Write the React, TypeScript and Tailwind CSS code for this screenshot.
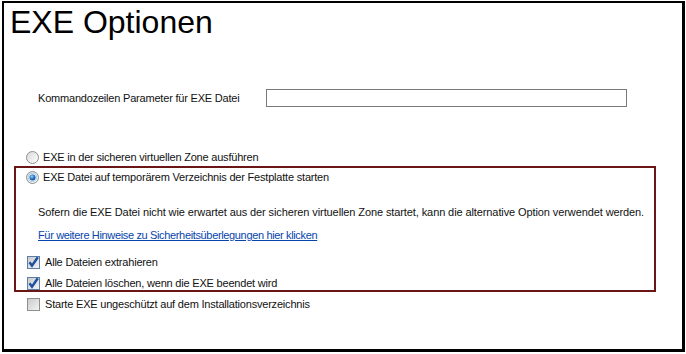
import React from "react";

const font = { fontFamily: '"Liberation Sans", Arial, sans-serif' };

function Radio({ checked }: { checked?: boolean }) {
  return (
    <svg width="13" height="13" viewBox="0 0 13 13" className="shrink-0">
      <defs>
        <linearGradient id={checked ? "rg1" : "rg0"} x1="0" y1="0" x2="1" y2="1">
          <stop offset="0" stopColor="#d8d8d8" />
          <stop offset="1" stopColor="#ffffff" />
        </linearGradient>
        <radialGradient id="dot" cx="0.4" cy="0.35" r="0.7">
          <stop offset="0" stopColor="#9fd4f7" />
          <stop offset="0.5" stopColor="#2f7fcf" />
          <stop offset="1" stopColor="#0b3f86" />
        </radialGradient>
      </defs>
      <circle cx="6.5" cy="6.5" r="6" fill={`url(#${checked ? "rg1" : "rg0"})`} stroke="#8e8f8f" strokeWidth="1" />
      {checked && (
        <>
          <circle cx="6.5" cy="6.5" r="4.3" fill="none" stroke="#a7d4f2" strokeWidth="1" />
          <circle cx="6.5" cy="6.5" r="3" fill="url(#dot)" />
        </>
      )}
    </svg>
  );
}

function Check({ checked }: { checked?: boolean }) {
  return (
    <svg width="13" height="13" viewBox="0 0 13 13" className="shrink-0">
      <defs>
        <linearGradient id="cbg" x1="0" y1="0" x2="1" y2="1">
          <stop offset="0" stopColor="#c9c9c9" />
          <stop offset="1" stopColor="#f4f4f4" />
        </linearGradient>
      </defs>
      <rect x="0.5" y="0.5" width="12" height="12" fill="url(#cbg)" stroke={checked ? "#5c7fa8" : "#8e8f8f"} />
      {checked && (
        <path d="M2.5 6.2 L5 9.6 L10.8 1.2" fill="none" stroke="#1b4fa0" strokeWidth="2.4" strokeLinejoin="miter" />
      )}
    </svg>
  );
}

export default function App() {
  return (
    <div className="w-[686px] h-[354px] bg-white pt-[1px] pl-[2px]" style={font}>
      <div className="w-[683px] h-[351px] border-black border-l-2 border-t-2 border-r-[3px] border-b-[3px] flex flex-col">
        <div className="mt-[3px] ml-[6px] text-[32px] leading-[32px] text-black">EXE Optionen</div>

        <div className="mt-[51px] flex items-center h-[18px] text-[11px] tracking-[-0.2px] text-[#111]">
          <div className="ml-[34px] w-[228px]">Kommandozeilen Parameter für EXE Datei</div>
          <div className="w-[361px] h-[18px] border border-[#7a7a7a] bg-white" />
        </div>

        <div className="mt-[43px] ml-[22px] flex items-center gap-[4px] h-[14px] text-[11px] tracking-[-0.2px] text-[#111]">
          <Radio />
          <span>EXE in der sicheren virtuellen Zone ausführen</span>
        </div>

        <div className="mt-[2px] ml-[10px] w-[642px] h-[126px] border-2 border-[#6a1616] flex flex-col text-[11px] tracking-[-0.2px] text-[#111]">
          <div className="mt-[2px] ml-[10px] flex items-center gap-[4px] h-[14px]">
            <Radio checked />
            <span>EXE Datei auf temporärem Verzeichnis der Festplatte starten</span>
          </div>
          <div className="mt-[21px] ml-[22px] h-[14px] leading-[14px] whitespace-nowrap tracking-[-0.1px]">
            Sofern die EXE Datei nicht wie erwartet aus der sicheren virtuellen Zone startet, kann die alternative Option verwendet werden.
          </div>
          <div className="mt-[9px] ml-[22px] h-[14px] leading-[14px] text-[#0645ad] underline tracking-[-0.35px]">
            Für weitere Hinweise zu Sicherheitsüberlegungen hier klicken
          </div>
          <div className="mt-[13px] ml-[11px] flex items-center gap-[5px] h-[14px]">
            <Check checked />
            <span>Alle Dateien extrahieren</span>
          </div>
          <div className="mt-[7px] ml-[11px] flex items-center gap-[5px] h-[14px]">
            <Check checked />
            <span>Alle Dateien löschen, wenn die EXE beendet wird</span>
          </div>
        </div>

        <div className="mt-[5px] ml-[23px] flex items-center gap-[5px] h-[14px] text-[11px] tracking-[-0.2px] text-[#111]">
          <Check />
          <span>Starte EXE ungeschützt auf dem Installationsverzeichnis</span>
        </div>
      </div>
    </div>
  );
}
